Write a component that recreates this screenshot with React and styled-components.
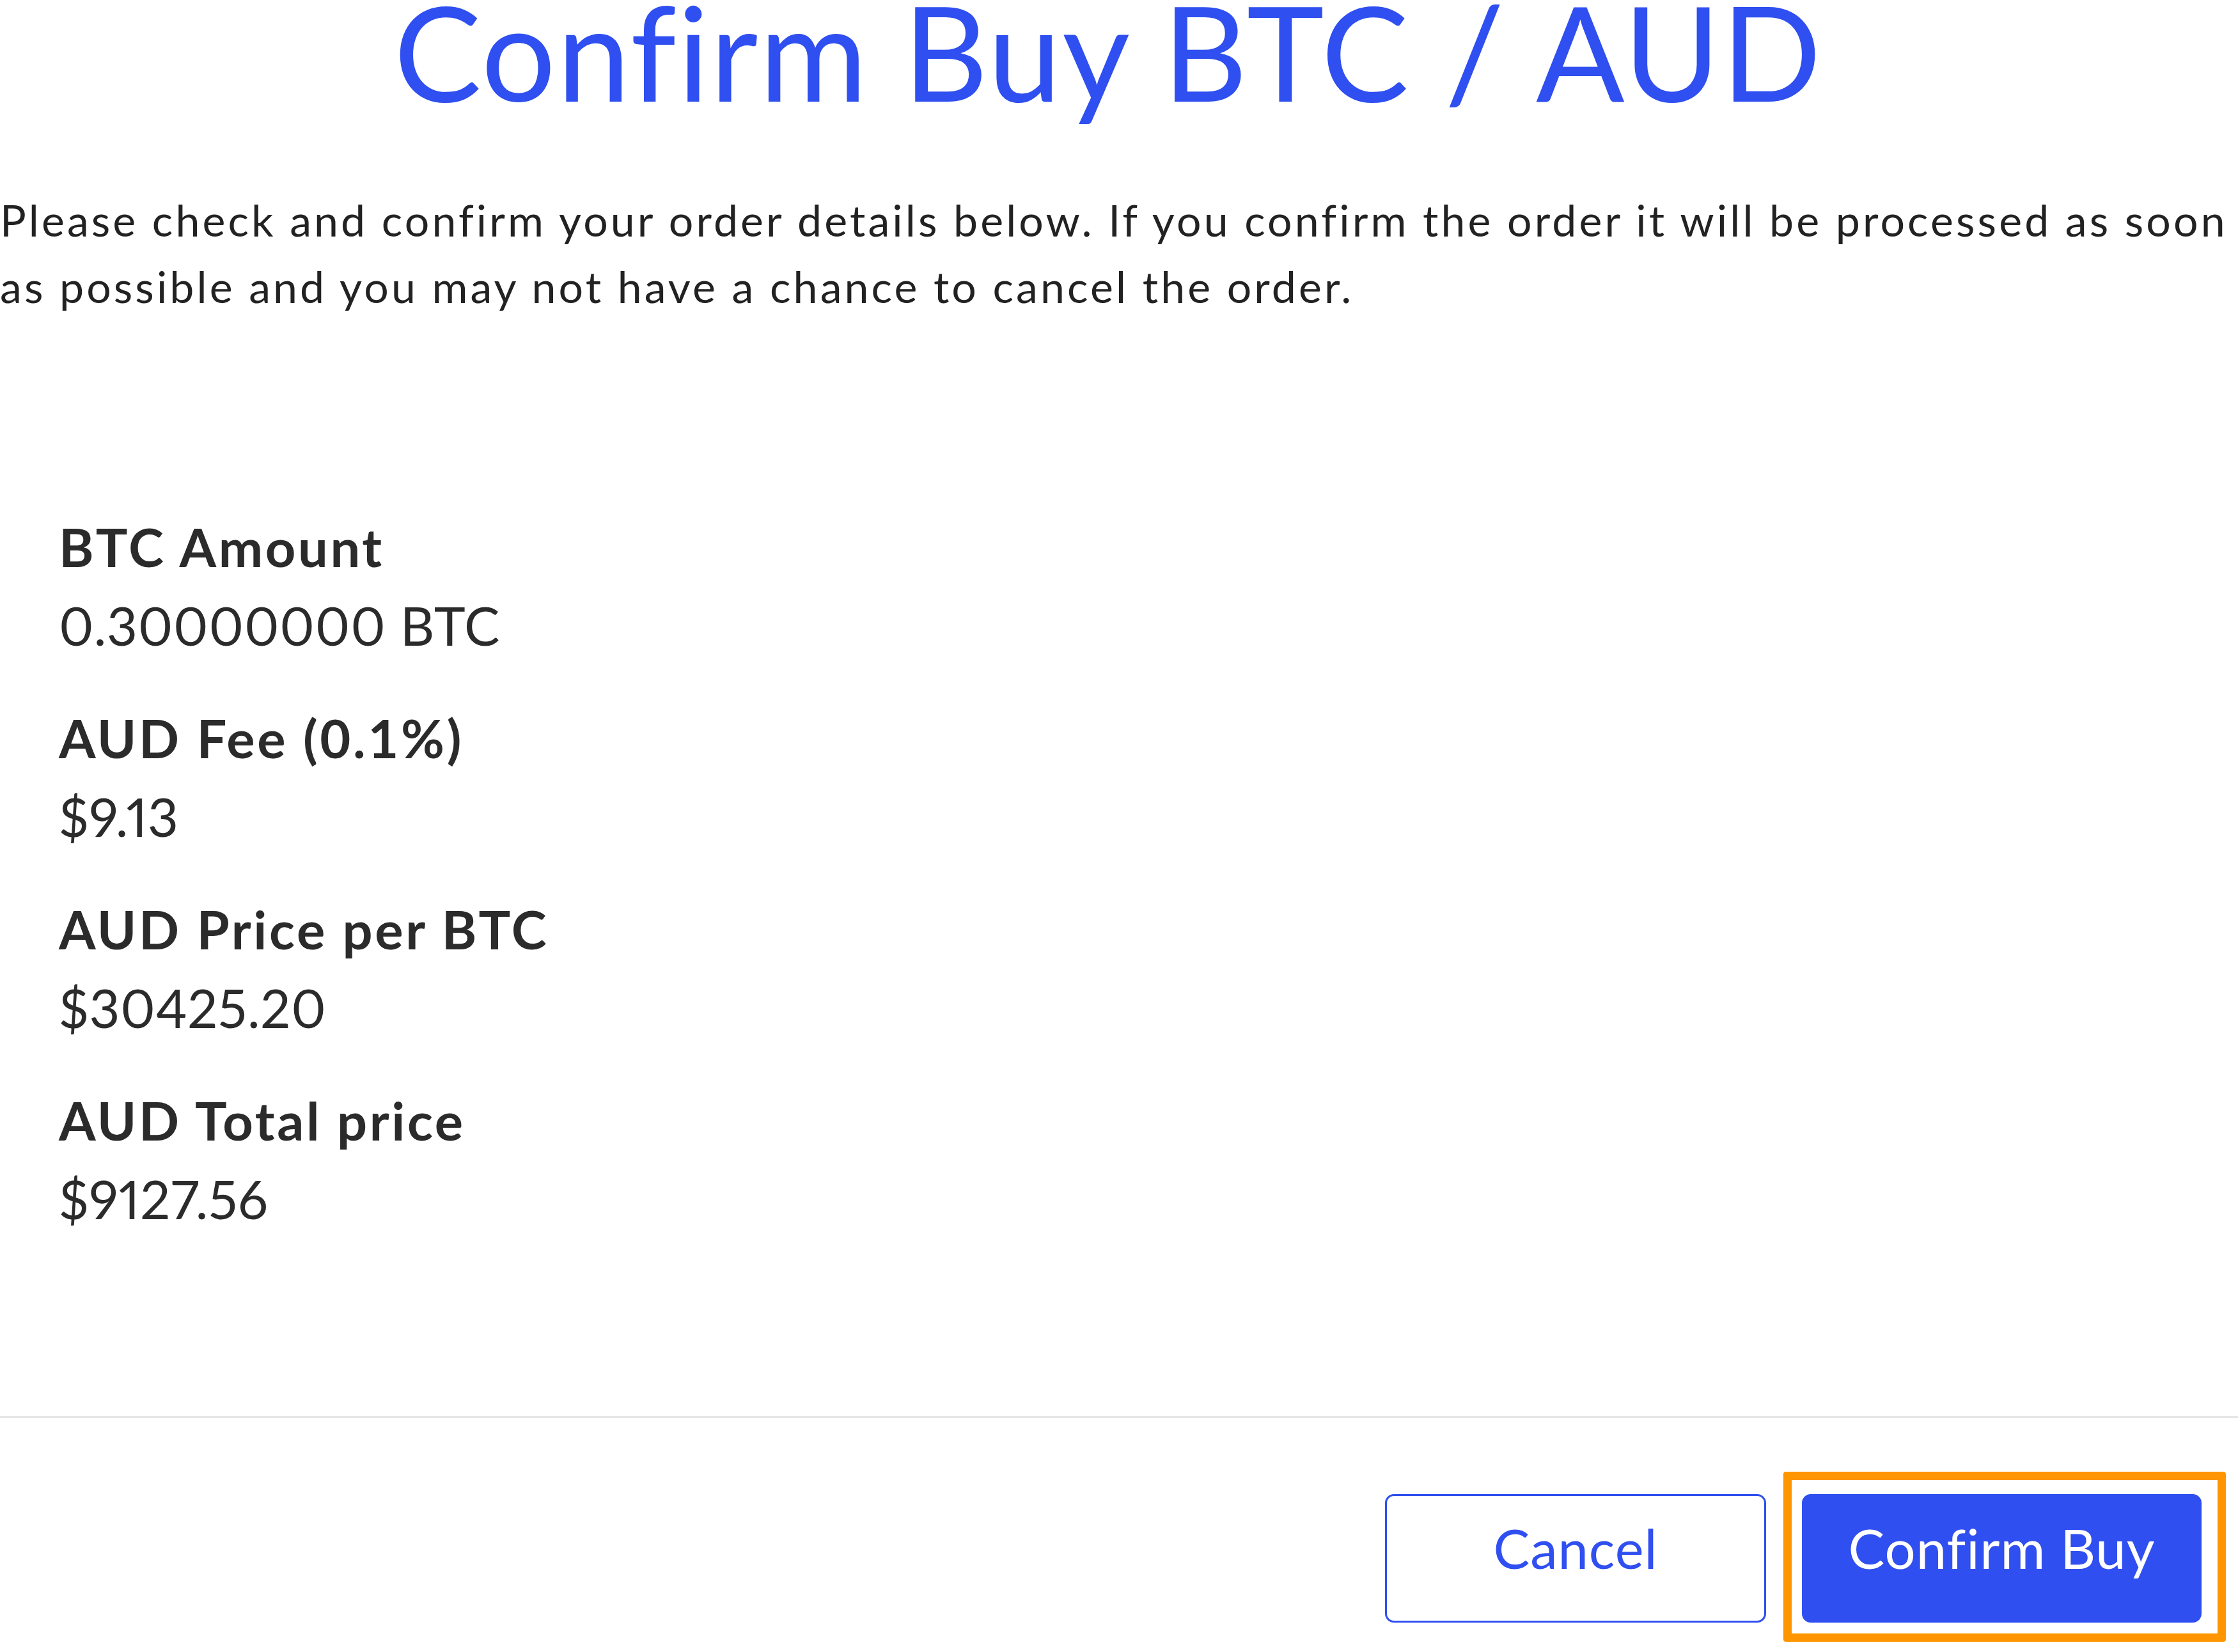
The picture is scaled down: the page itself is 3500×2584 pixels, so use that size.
import React from "react";
import styled, { createGlobalStyle } from "styled-components";

const Global = createGlobalStyle`
  html, body { margin: 0; padding: 0; background: #ffffff; }
  body {
    font-family: Lato, "Open Sans", sans-serif;
    font-variant-ligatures: none;
    overflow: hidden;
  }
  * { box-sizing: border-box; }
`;

const Dialog = styled.div`
  width: 3500px;
  height: 2584px;
  display: flex;
  flex-direction: column;
  background: #fff;
  overflow: hidden;
`;

const Title = styled.h1`
  margin: -22px 0 0 0;
  padding-right: 34px;
  font-size: 205px;
  line-height: 1;
  font-weight: 400;
  color: #2f4ff0;
  text-align: center;
  white-space: nowrap;
  letter-spacing: 2px;
  font-variant-ligatures: none;
`;

const Intro = styled.p`
  margin: 109px 0 0 0;
  font-size: 68px;
  line-height: 104px;
  color: #222;
  letter-spacing: 4.1px;
`;

const Details = styled.dl`
  margin: 294px 0 0 0;
  padding: 0 0 0 92px;
  display: flex;
  flex-direction: column;
  gap: 53px;
`;

const Row = styled.div`
  display: flex;
  flex-direction: column;
`;

const Label = styled.dt`
  font-size: 83px;
  line-height: 123px;
  font-weight: 700;
  color: #2b2b2b;
  letter-spacing: 3.6px;
`;

const Value = styled.dd`
  margin: 0;
  font-size: 83px;
  line-height: 123px;
  font-weight: 400;
  color: #2b2b2b;
  letter-spacing: 0.8px;
  font-variant-numeric: proportional-nums;
`;

const Spacer = styled.div`
  flex: 1;
`;

const Footer = styled.div`
  border-top: 3px solid #e6e6e6;
  height: 369px;
  padding: 84px 19px 0 0;
  display: flex;
  justify-content: flex-end;
  align-items: flex-start;
`;

const Button = styled.button`
  height: 201px;
  padding: 0 0 34px 0;
  border-radius: 14px;
  font-family: Lato, "Open Sans", sans-serif;
  font-variant-ligatures: none;
  font-size: 85px;
  font-weight: 400;
  letter-spacing: 1px;
  cursor: pointer;
  border: 3px solid #2f4ff0;
  background: ${(p) => (p.$primary ? "#304ff0" : "#ffffff")};
  color: ${(p) => (p.$primary ? "#ffffff" : "#2f4ff0")};
  width: ${(p) => p.$width}px;
`;

const CancelButton = styled(Button)`
  margin-top: 35px;
  margin-right: 27px;
`;

const Highlight = styled.div`
  border: 13px solid #ff9500;
  border-radius: 4px;
  padding: 22px 25px 17px 16px;
  display: flex;
`;

const rows = [
  ["BTC Amount", "0.30000000 BTC"],
  ["AUD Fee (0.1%)", "$9.13"],
  ["AUD Price per BTC", "$30425.20"],
  ["AUD Total price", "$9127.56"],
];

export default function App() {
  return (
    <>
      <Global />
      <Dialog>
        <Title>Confirm Buy BTC / AUD</Title>
        <Intro>
          Please check and confirm your order details below. If you confirm the
          order it will be processed as soon as possible and you may not have a
          chance to cancel the order.
        </Intro>
        <Details>
          {rows.map(([l, v]) => (
            <Row key={l}>
              <Label>{l}</Label>
              <Value>{v}</Value>
            </Row>
          ))}
        </Details>
        <Spacer />
        <Footer>
          <CancelButton $width={596}>Cancel</CancelButton>
          <Highlight>
            <Button $primary $width={625}>Confirm Buy</Button>
          </Highlight>
        </Footer>
      </Dialog>
    </>
  );
}
